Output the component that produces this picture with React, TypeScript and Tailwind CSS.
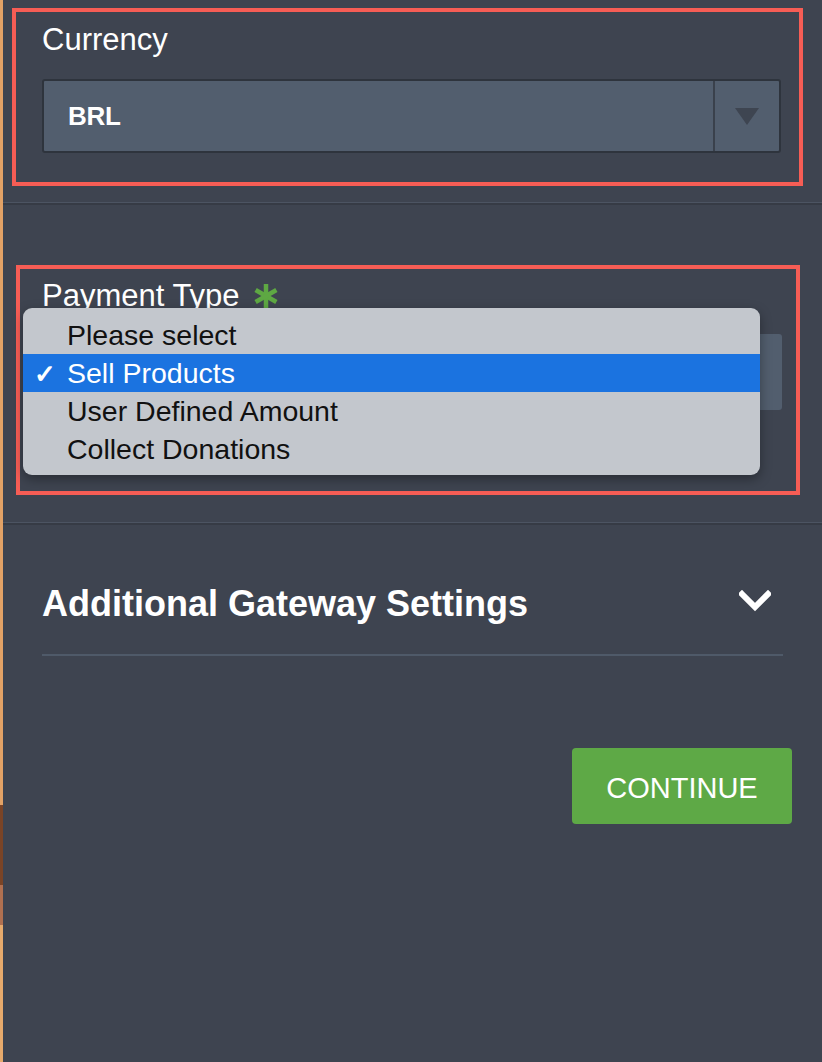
import React from "react";

const font = { fontFamily: '"Liberation Sans", Arial, sans-serif' };

function Separator() {
  return (
    <div className="w-full">
      <div className="h-px bg-[#4c5462]" />
      <div className="h-[2px] bg-[#363b45]" />
    </div>
  );
}

export default function App() {
  return (
    <div
      className="relative flex w-[822px] h-[1062px] bg-[#3e4450] overflow-hidden"
      style={font}
    >
      <div className="w-[3px] shrink-0 flex flex-col">
        <div className="h-[805px] bg-[#e2a266]" />
        <div className="h-[80px] bg-[#7a4426]" />
        <div className="h-[40px] bg-[#b07050]" />
        <div className="flex-1 bg-[#e6aa6c]" />
      </div>
      <div className="flex-1 flex flex-col">
        {/* Currency section */}
        <div className="ml-[9px] mt-[8px] w-[791px] h-[178px] border-4 border-[#f65d55] pl-[26px] pr-[18px] pt-[10px]">
          <div className="text-white text-[31px] leading-[36px]">Currency</div>
          <div className="mt-[21px] flex h-[74px] w-[739px] rounded-[3px] border-2 border-[#2e343d] bg-[#525e6e]">
            <div className="flex-1 flex items-center pl-[24px] text-white text-[26px] font-bold tracking-[-0.3px]">
              BRL
            </div>
            <div className="w-[2px] bg-[#3a414c]" />
            <div className="w-[64px] flex items-center justify-center">
              <svg width="24" height="17" viewBox="0 0 24 17">
                <polygon points="0,0 24,0 12,17" fill="#3e4551" />
              </svg>
            </div>
          </div>
        </div>

        <div className="mt-[16px]">
          <Separator />
        </div>

        {/* Payment type section */}
        <div className="ml-[13px] mt-[60px] w-[784px] h-[230px] border-4 border-[#f65d55] pl-[22px] pt-[9px]">
          <div className="flex items-center text-white text-[31px] leading-[36px]">
            <span>Payment Type</span>
            <span className="ml-[14px]">
              <svg width="24" height="24" viewBox="0 0 24 24">
                <g stroke="#5ea843" strokeWidth="4.5" strokeLinecap="butt">
                  <line x1="12" y1="0" x2="12" y2="24" />
                  <line x1="1.6" y1="6" x2="22.4" y2="18" />
                  <line x1="1.6" y1="18" x2="22.4" y2="6" />
                </g>
              </svg>
            </span>
          </div>
          <div className="mt-[20px] h-[76px] w-[740px] rounded-[3px] bg-[#525e6e]" />
        </div>

        <div className="mt-[27px]">
          <Separator />
        </div>

        {/* Additional gateway settings */}
        <div className="px-[39px] pt-[57px]">
          <div className="flex items-center justify-between pr-[12px]">
            <div className="text-white text-[36px] leading-[44px] font-bold">
              Additional Gateway Settings
            </div>
            <svg width="32" height="22" viewBox="0 0 32 22" className="-mt-[6px]">
              <polyline
                points="3,4 16,17 29,4"
                fill="none"
                stroke="#ffffff"
                strokeWidth="6"
                strokeLinecap="square"
              />
            </svg>
          </div>
          <div className="mt-[28px] h-[2px] bg-[#4f5a69]" />
        </div>

        <div className="flex justify-end pr-[30px] mt-[92px]">
          <button className="w-[220px] h-[76px] rounded-[4px] bg-[#5ea946] text-white text-[29px] pt-[5px] flex items-center justify-center">
            CONTINUE
          </button>
        </div>
      </div>

      {/* Open dropdown menu */}
      <div className="absolute left-[23px] top-[308px] w-[737px] h-[167px] rounded-[9px] bg-[#c3c7cd] shadow-[0_4px_12px_rgba(0,0,0,0.35)] pt-[8px] overflow-hidden">
        {[
          { label: "Please select", sel: false },
          { label: "Sell Products", sel: true },
          { label: "User Defined Amount", sel: false },
          { label: "Collect Donations", sel: false },
        ].map((o) => (
          <div
            key={o.label}
            className={
              o.sel
                ? "relative h-[38px] flex items-center pl-[44px] bg-[#1b73e0] text-white text-[28.5px]"
                : "relative h-[38px] flex items-center pl-[44px] text-[#111111] text-[28.5px]"
            }
          >
            {o.sel && (
              <span className="absolute left-[11px] top-[1px] text-[26px] font-bold">✓</span>
            )}
            {o.label}
          </div>
        ))}
      </div>
    </div>
  );
}
